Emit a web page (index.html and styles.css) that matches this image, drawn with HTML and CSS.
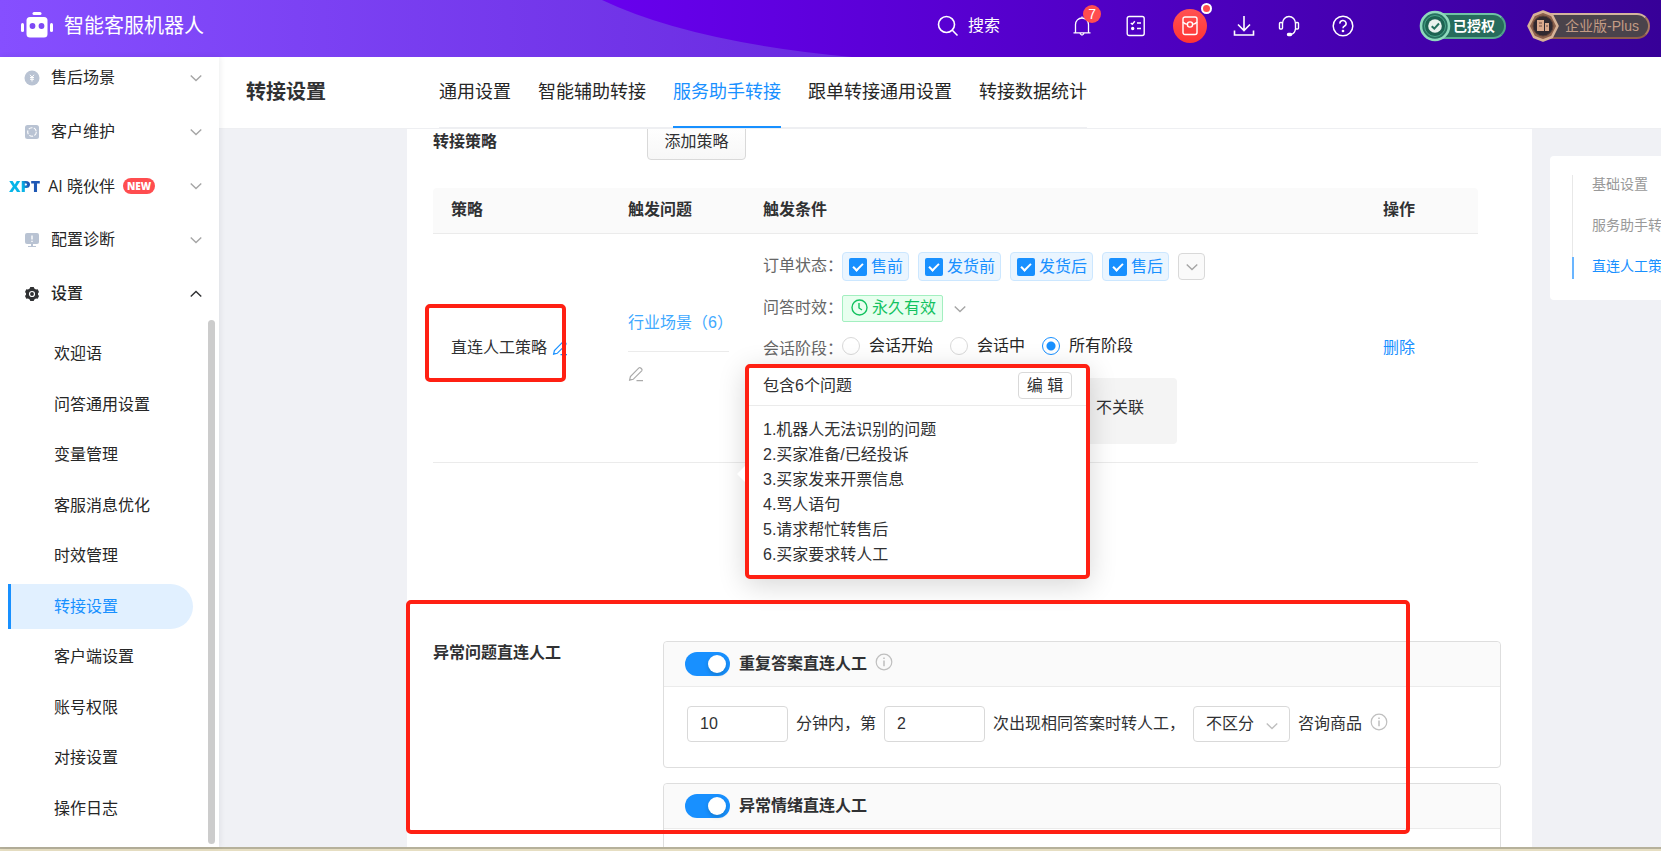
FILE: index.html
```html
<!DOCTYPE html>
<html lang="zh-CN">
<head>
<meta charset="utf-8">
<title>转接设置 - 智能客服机器人</title>
<link rel="stylesheet" href="styles.css">
</head>
<body>
<svg class="defs" aria-hidden="true">
  <symbol id="chevron" viewBox="0 0 12 12"><path d="M1.500 3.800 6 8.200 10.500 3.800" fill="none" stroke="currentColor" stroke-width="1.200"/></symbol>
  <symbol id="pencil" viewBox="0 0 16 16"><path d="M1.600 14.200 2.400 10.500 10.900 1.900Q11.800 1.200 12.700 2L13.700 3Q14.500 3.900 13.700 4.800L5.200 13.300ZM8.500 14.600H15" fill="none" stroke="currentColor" stroke-width="1.200"/></symbol>
  <symbol id="info" viewBox="0 0 18 18"><circle cx="9" cy="9" r="7.800" fill="none" stroke="currentColor" stroke-width="1.200"/><path d="M9 7.500V13.200M9 4.600V6" stroke="currentColor" stroke-width="1.500"/></symbol>
</svg>

<header class="topbar">
  <svg class="topbar-bg" viewBox="0 0 1661 57" preserveAspectRatio="none" aria-hidden="true">
    <defs>
      <linearGradient id="g1" x1="0" x2="1661" y1="0" y2="0" gradientUnits="userSpaceOnUse"><stop offset="0" stop-color="#864fff"/><stop offset=".5" stop-color="#6a2be0"/></linearGradient>
      <linearGradient id="g2" x1="600" x2="1661" y1="0" y2="0" gradientUnits="userSpaceOnUse"><stop offset="0" stop-color="#6800ee"/><stop offset="1" stop-color="#370098"/></linearGradient>
    </defs>
    <path d="M0 0H1661V57H0Z" fill="url(#g1)"/>
    <path d="M602 0Q690 42 852 57H1661V0Z" fill="url(#g2)"/>
  </svg>
  <div class="brand">
    <svg width="34" height="28" viewBox="0 0 34 28" fill="#fff" aria-hidden="true"><rect x="12.500" y="0" width="9" height="3" rx="1.500"/><rect x="6.500" y="5" width="21" height="20.500" rx="3.500"/><rect x="1" y="11" width="3" height="9" rx="1.500"/><rect x="30" y="11" width="3" height="9" rx="1.500"/><circle cx="12.500" cy="14" r="2.900" fill="#7d48f5"/><circle cx="21.500" cy="14" r="2.900" fill="#7d48f5"/></svg>
    <span>智能客服机器人</span>
  </div>
  <div class="tools">
    <button class="tool search"><svg width="22" height="22" viewBox="0 0 22 22" fill="none" stroke="#fff" stroke-width="1.600"><circle cx="9.500" cy="9.500" r="8"/><path d="M15.300 15.300 20.500 20.500"/></svg><span>搜索</span></button>
    <button class="tool bell" aria-label="通知"><svg width="20" height="22" viewBox="0 0 20 22" fill="none" stroke="#fff" stroke-width="1.300"><path d="M1.500 17.800H18.500M3.500 17.800V9.500A6.500 6.500 0 0 1 16.500 9.500V17.800M8 18.500Q10 21.500 12 18.500M10 1.500V3"/></svg><span class="count">7</span></button>
    <button class="tool list" aria-label="任务"><svg width="20" height="22" viewBox="0 0 20 22" fill="none" stroke="#fff" stroke-width="1.400"><rect x="1.200" y="1.500" width="17" height="19" rx="2"/><path d="M4.800 8 6.300 9.300 8.800 6.300M11 8H15M11 13.500H15"/><circle cx="6.700" cy="13.500" r="1" fill="#fff"/></svg></button>
    <button class="tool gift" aria-label="红包"><svg width="16" height="20" viewBox="0 0 16 20" fill="none" stroke="#fff" stroke-width="1.400"><rect x="1" y="1" width="14" height="17.500" rx="2"/><path d="M1 6Q3 8.500 5.300 8M10.700 8Q13 8.500 15 6"/><circle cx="8" cy="8.500" r="2.600"/></svg><span class="dot"></span></button>
    <button class="tool download" aria-label="下载"><svg width="22" height="22" viewBox="0 0 22 22" fill="none" stroke="#fff" stroke-width="1.600"><path d="M11 1V15M5 9.500 11 15.500 17 9.500M1.500 15.500V20H20.500V15.500"/></svg></button>
    <button class="tool headset" aria-label="客服"><svg width="22" height="22" viewBox="0 0 22 22" fill="none" stroke="#fff" stroke-width="1.400"><path d="M4.500 8.500A6.500 7 0 0 1 17.500 8.500M17.500 13.500Q17 18.500 13 19.500"/><rect x="1.500" y="7.500" width="3" height="6.500" rx="1"/><rect x="17.500" y="7.500" width="3" height="6.500" rx="1"/><rect x="9.500" y="18.500" width="4" height="2" rx="1" fill="#fff"/></svg></button>
    <button class="tool help" aria-label="帮助"><svg width="22" height="22" viewBox="0 0 22 22" fill="none" stroke="#fff" stroke-width="1.500"><circle cx="11" cy="11" r="9.800"/><path d="M7.900 8.600A3.100 3 0 1 1 12.300 11.200Q11 11.800 11 13.300"/><circle cx="11" cy="16" r=".6" fill="#fff"/></svg></button>
    <div class="plaque green"><svg width="32" height="32" viewBox="0 0 32 32" aria-hidden="true"><circle cx="16" cy="16" r="14" fill="#26705f" stroke="#8fd9bd" stroke-width="2.600"/><circle cx="16" cy="16" r="10.500" fill="#1d6352" stroke="#4aa588"/><circle cx="16" cy="16" r="6.800" fill="#e9f2ee"/><path d="M12.700 16.200 15.300 18.600 20 13.500" fill="none" stroke="#24705d" stroke-width="2"/></svg><span>已授权</span></div>
    <div class="plaque gold"><svg width="32" height="32" viewBox="0 0 32 32" aria-hidden="true"><path d="M16 1.500 25 5 30.500 16 25 27 16 30.500 7 27 1.500 16 7 5Z" fill="#8b604c" stroke="#d6b196" stroke-width="2.600" stroke-linejoin="round"/><circle cx="16" cy="16" r="10" fill="#302930" stroke="#593f37"/><path d="M10 10H17V21H10ZM18 13H22V21H18Z" fill="#dbab8e"/><path d="M12 13H15M12 16H15M19 16H21" stroke="#6c4b42"/></svg><span>企业版-Plus</span></div>
  </div>
</header>

<div class="body">
  <nav class="sidebar">
    <ul class="menu">
      <li><a href="#"><svg class="mi" viewBox="0 0 16 16"><circle cx="8" cy="8" r="7.500" fill="#b9c3d3"/><path d="M6 4.800 8 7.200 10 4.800M6 7.500H10M6 9.300H10M8 7V11.500" fill="none" stroke="#fff"/></svg><span>售后场景</span><svg class="arrow"><use href="#chevron"/></svg></a></li>
      <li><a href="#"><svg class="mi" viewBox="0 0 16 16"><rect x="1" y="1" width="14" height="14" rx="2.500" fill="#b9c3d3"/><circle cx="8" cy="8" r="4.300" fill="none" stroke="#fff" stroke-width="1.100" stroke-dasharray="4 1.400"/></svg><span>客户维护</span><svg class="arrow"><use href="#chevron"/></svg></a></li>
      <li><a href="#" class="ai"><b class="xpt">XPT</b><span>AI 晓伙伴</span><em>NEW</em><svg class="arrow"><use href="#chevron"/></svg></a></li>
      <li><a href="#"><svg class="mi" viewBox="0 0 16 16"><rect x="1" y="1" width="14" height="11" rx="2" fill="#b9c3d3"/><path d="M7 12H9V14H12V15H4V14H7Z" fill="#b9c3d3"/><path d="M8 3.500V7.500M8 8.700V10" stroke="#fff" stroke-width="1.400"/></svg><span>配置诊断</span><svg class="arrow"><use href="#chevron"/></svg></a></li>
      <li><a href="#" class="open"><svg class="mi" viewBox="0 0 16 16"><path d="M6.300 1H9.700L10.300 2.600 12 3.500 13.700 3.200 15 6 14 7.300V8.700L15 10 13.700 12.800 12 12.500 10.300 13.400 9.700 15H6.300L5.700 13.400 4 12.500 2.300 12.800 1 10 2 8.700V7.300L1 6 2.300 3.200 4 3.500 5.700 2.600Z" fill="#303133"/><circle cx="8" cy="8" r="2.500" fill="none" stroke="#fff" stroke-width="1.200"/></svg><span>设置</span><svg class="arrow up"><use href="#chevron"/></svg></a></li>
    </ul>
    <ul class="submenu">
      <li><a href="#">欢迎语</a></li>
      <li><a href="#">问答通用设置</a></li>
      <li><a href="#">变量管理</a></li>
      <li><a href="#">客服消息优化</a></li>
      <li><a href="#">时效管理</a></li>
      <li><a href="#" class="active">转接设置</a></li>
      <li><a href="#">客户端设置</a></li>
      <li><a href="#">账号权限</a></li>
      <li><a href="#">对接设置</a></li>
      <li><a href="#">操作日志</a></li>
    </ul>
    <div class="scrollbar"></div>
  </nav>

  <main class="main">
    <div class="pagehead">
      <h1>转接设置</h1>
      <nav class="tabs">
        <a href="#">通用设置</a>
        <a href="#">智能辅助转接</a>
        <a href="#" class="active">服务助手转接</a>
        <a href="#">跟单转接通用设置</a>
        <a href="#">转接数据统计</a>
      </nav>
    </div>

    <div class="content">
      <div class="panel">
        <section class="strategy">
          <div class="row-head"><h2>转接策略</h2><button class="add">添加策略</button></div>
          <table class="grid">
            <colgroup><col class="c1"><col class="c2"><col><col class="c4"></colgroup>
            <thead><tr><th>策略</th><th>触发问题</th><th>触发条件</th><th>操作</th></tr></thead>
            <tbody><tr>
              <td class="name"><div class="name-line"><span>直连人工策略</span><svg class="pen blue"><use href="#pencil"/></svg></div><div class="mark mark-name"></div></td>
              <td class="question"><a href="#">行业场景（6）</a><hr><svg class="pen"><use href="#pencil"/></svg></td>
              <td>
                <div class="conditions">
                  <div class="cond r1"><span class="lab">订单状态：</span>
                    <label class="tag"><input type="checkbox" checked>售前</label>
                    <label class="tag"><input type="checkbox" checked>发货前</label>
                    <label class="tag"><input type="checkbox" checked>发货后</label>
                    <label class="tag"><input type="checkbox" checked>售后</label>
                    <button class="more" aria-label="更多状态"><svg class="arrow"><use href="#chevron"/></svg></button>
                  </div>
                  <div class="cond r2"><span class="lab">问答时效：</span>
                    <span class="valid"><svg width="17" height="17" viewBox="0 0 17 17" fill="none" stroke="#13c25f" stroke-width="1.400"><circle cx="8.500" cy="8.500" r="7.500"/><path d="M8 4V9L11 11"/></svg>永久有效</span>
                    <svg class="arrow"><use href="#chevron"/></svg>
                  </div>
                  <div class="cond r3"><span class="lab">会话阶段：</span>
                    <label><input type="radio" name="stage">会话开始</label>
                    <label><input type="radio" name="stage">会话中</label>
                    <label><input type="radio" name="stage" checked>所有阶段</label>
                  </div>
                  <div class="relation">不关联</div>
                </div>
              </td>
              <td><a href="#" class="del">删除</a></td>
            </tr></tbody>
          </table>
          <div class="popover">
            <div class="pop-head"><span>包含6个问题</span><button>编 辑</button></div>
            <ul>
              <li>1.机器人无法识别的问题</li>
              <li>2.买家准备/已经投诉</li>
              <li>3.买家发来开票信息</li>
              <li>4.骂人语句</li>
              <li>5.请求帮忙转售后</li>
              <li>6.买家要求转人工</li>
            </ul>
          </div>
        </section>

        <section class="abnormal">
          <h2>异常问题直连人工</h2>
          <div class="cards">
            <div class="card">
              <div class="card-head"><label><input type="checkbox" class="switch" checked>重复答案直连人工</label><svg class="info"><use href="#info"/></svg></div>
              <div class="card-body">
                <input type="text" value="10" aria-label="分钟数"><span>分钟内，第</span>
                <input type="text" value="2" aria-label="次数"><span>次出现相同答案时转人工，</span>
                <span class="select"><select aria-label="是否区分商品"><option>不区分</option><option>区分</option></select><svg class="arrow"><use href="#chevron"/></svg></span>
                <span>咨询商品</span><svg class="info"><use href="#info"/></svg>
              </div>
            </div>
            <div class="card">
              <div class="card-head"><label><input type="checkbox" class="switch" checked>异常情绪直连人工</label></div>
              <div class="card-body"></div>
            </div>
          </div>
          <div class="mark mark-abnormal"></div>
        </section>
      </div>
      <aside class="anchor">
        <a href="#">基础设置</a>
        <a href="#">服务助手转接</a>
        <a href="#" class="active">直连人工策略</a>
      </aside>
    </div>
  </main>
</div>
<div class="desk-edge"></div>
</body>
</html>
```

FILE: styles.css
```css
*, ::before, ::after { box-sizing: border-box; }
body {
  margin: 0;
  height: 100vh;
  overflow: hidden;
  display: flex;
  flex-direction: column;
  font: 16px/24px "Liberation Sans", "Noto Sans CJK SC", sans-serif;
  color: #303133;
  background: #fff;
}
a { color: inherit; text-decoration: none; }
ul { list-style: none; margin: 0; padding: 0; }
h1, h2 { margin: 0; font-size: 16px; font-weight: 700; }
button, input, select { font: inherit; color: inherit; margin: 0; }
button { background: none; border: 0; padding: 0; white-space: nowrap; }
svg { flex: none; display: block; }
.defs { position: absolute; width: 0; height: 0; }
.arrow { width: 14px; height: 14px; color: #a6a6a6; }
.info { width: 18px; height: 18px; margin-bottom: 4px; color: #bfbfbf; }

/* top bar */
.topbar {
  position: relative;
  flex: none;
  height: 57px;
  display: flex;
  align-items: center;
  justify-content: space-between;
  padding: 0 11px 0 20px;
  color: #fff;
}
.topbar-bg { position: absolute; inset: 0; width: 100%; height: 100%; }
.brand, .tools { position: relative; display: flex; align-items: center; padding-bottom: 6px; }
.brand { gap: 10px; font-size: 20px; }
.tool { position: relative; display: flex; align-items: center; justify-content: center; }
.search { gap: 9px; margin-right: 72px; }
.bell { margin-right: 34px; }
.list { margin-right: 27px; }
.gift {
  width: 34px;
  height: 34px;
  border-radius: 50%;
  background: linear-gradient(#ff5252, #ff3434);
  margin-right: 26px;
}
.download { margin-right: 23px; }
.headset { margin-right: 32px; }
.help { margin-right: 65px; }
.count {
  position: absolute;
  left: 11px;
  top: -10px;
  width: 18px;
  height: 18px;
  border-radius: 9px;
  background: #ff4d4f;
  font-size: 14px;
  line-height: 18px;
}
.dot {
  position: absolute;
  right: -5px;
  top: -6px;
  width: 11px;
  height: 11px;
  border-radius: 50%;
  border: 2px solid #fff;
  background: #ff4d4f;
}
.plaque { display: flex; align-items: center; font-size: 14px; font-weight: 700; line-height: 22px; white-space: nowrap; }
.plaque svg { position: relative; z-index: 1; }
.plaque span { margin-left: -14px; padding: 0 9px 0 14px; border-radius: 0 13px 13px 0; border: 2px solid; }
.green { margin-right: 21px; }
.green span { background: #276b5c; border-color: #6fc3a4 #4fa487 #58ab8e; color: #fff; }
.gold span { padding-left: 18px; background: #4a434b; border-color: #d3b49d #a87a62 #8f5d4a; color: #c39b84; font-weight: 400; }

/* layout */
.body { flex: 1; min-height: 0; display: flex; }
.desk-edge { flex: none; height: 4px; background: #e6dec2; border-top: 2px solid #b6b19b; }

/* sidebar */
.sidebar {
  position: relative;
  z-index: 1;
  flex: none;
  width: 219px;
  display: flex;
  flex-direction: column;
  background: #fff;
  box-shadow: 1px 0 6px rgba(0, 21, 41, .08);
  color: #262626;
}
.menu { display: flex; flex-direction: column; gap: 12px; }
.menu a { display: flex; align-items: center; height: 42px; padding: 0 16px 0 24px; gap: 11px; }
.menu .arrow { margin-left: auto; }
.menu .up { transform: rotate(180deg); color: #303133; }
.menu .open { font-weight: 500; }
.menu .ai { padding-left: 9px; gap: 8px; font-family: "Open Sans", "Noto Sans CJK SC", sans-serif; }
.mi { width: 16px; height: 16px; }
.xpt {
  font-size: 16px;
  font-weight: 800;
  color: transparent;
  background: linear-gradient(75deg, #07b5e8 45%, #1f58b4 60%);
  background-clip: text;
}
.menu em {
  padding: 0 4px;
  border-radius: 8px;
  background: #ff4d4f;
  color: #fff;
  font-size: 10px;
  font-style: normal;
  font-weight: 800;
  line-height: 16px;
}
.submenu { flex: 1; display: flex; flex-direction: column; justify-content: space-between; padding: 16px 26px 16px 8px; }
.submenu a { display: block; padding-left: 43px; border-left: 3px solid transparent; line-height: 45px; }
.submenu .active { color: #1890ff; background: #e1f0ff; border-left-color: #1890ff; border-radius: 0 23px 23px 0; }
.scrollbar { position: absolute; right: 4px; top: 263px; bottom: 3px; width: 7px; border-radius: 4px; background: #ccc; }

/* page head */
.main { flex: 1; min-width: 0; display: flex; flex-direction: column; background: #f0f1f5; }
.pagehead { flex: none; height: 72px; display: flex; background: #fff; border-bottom: 1px solid #eeeff2; }
.pagehead h1 { width: 220px; padding-left: 27px; font-size: 20px; line-height: 70px; }
.tabs { display: flex; gap: 27px; font-size: 18px; line-height: 70px; border-bottom: 1px solid #eeeff2; color: #262626; white-space: nowrap; }
.tabs a { height: 71px; }
.tabs .active { color: #1890ff; border-bottom: 2px solid #1890ff; }

/* content */
.content { position: relative; flex: 1; min-height: 0; overflow: hidden; display: flex; align-items: flex-start; gap: 18px; padding-left: 188px; }
.panel { flex: 1; min-width: 0; background: #fff; padding: 0 31px 0 26px; margin-top: -5px; }
.strategy { position: relative; margin-right: 23px; }
.row-head { display: flex; align-items: center; height: 36px; }
.row-head h2 { width: 214px; }
.add { height: 36px; width: 99px; border: 1px solid #d9d9d9; border-radius: 4px; background: linear-gradient(#fff, #f7f7f7); }
.grid { width: 100%; margin-top: 28px; table-layout: fixed; border-collapse: separate; border-spacing: 0; }
.c1 { width: 177px; }
.c2 { width: 135px; }
.c4 { width: 113px; }
.grid th { height: 46px; padding: 0 18px 2px; text-align: left; font-weight: 700; background: #fafafa; border-bottom: 1px solid #ebebeb; }
.grid th:first-child { border-radius: 4px 0 0 0; }
.grid th:last-child { border-radius: 0 4px 0 0; }
.grid td { padding: 18px; border-bottom: 1px solid #ebebeb; vertical-align: middle; }
.grid .name { position: relative; padding-right: 0; }
.name-line { display: flex; align-items: center; gap: 5px; }
.pen { width: 16px; height: 16px; color: #aaa; }
.blue { color: #1890ff; }
.question a { color: #40a9ff; white-space: nowrap; }
.grid .question { padding-bottom: 21px; }
.question hr { border: 0; border-top: 1px solid #ebebeb; margin: 16px 0 14px; width: 101px; }
.del { color: #1890ff; }
.conditions { display: flex; flex-direction: column; gap: 14px; }
.cond { display: flex; align-items: center; }
.lab { width: 79px; color: #666; white-space: nowrap; }
.r1 { height: 29px; }
.r2 { height: 27px; }
.r1 .lab, .r2 .lab { padding-bottom: 2px; }
.r3 { height: 20px; gap: 17px; color: #262626; }
.r3 .lab { margin-right: -17px; padding-top: 5px; }
.r3 label { display: flex; align-items: center; gap: 9px; white-space: nowrap; }
.tag { display: flex; align-items: center; gap: 4px; height: 29px; padding: 0 5px 0 6px; margin-right: 9px; border: 1px solid #cce7ff; border-radius: 4px; background: #eaf5ff; color: #1890ff; white-space: nowrap; }
.tag input { appearance: none; display: flex; justify-content: center; width: 18px; height: 18px; padding-top: 3px; border-radius: 2px; background: #1890ff; }
.tag input::after { content: ""; width: 6px; height: 10px; border: solid #fff; border-width: 0 2px 2px 0; transform: rotate(45deg); }
.more { display: flex; align-items: center; justify-content: center; width: 27px; height: 27px; border: 1px solid #d9d9d9; border-radius: 4px; background: #fafafa; }
.valid { display: flex; align-items: center; gap: 4px; height: 27px; padding: 0 6px 2px 8px; margin-right: 10px; border: 1px solid #a3efc0; border-radius: 2px; background: #e8ffef; color: #13c25f; white-space: nowrap; }
.r3 input { appearance: none; width: 18px; height: 18px; border: 1px solid #d9d9d9; border-radius: 50%; background: #fff; }
.r3 input:checked { border-color: #1890ff; background: radial-gradient(circle, #1890ff 4px, #fff 5px); }
.relation { width: 414px; height: 66px; margin-top: 8px; padding: 18px 33px 0 0; border-radius: 4px; background: #f4f4f4; text-align: right; }

/* question popover */
.popover {
  position: absolute;
  z-index: 2;
  left: 312px;
  top: 240px;
  width: 345px;
  height: 215px;
  border: 4px solid #ff2013;
  border-radius: 5px;
  background: #fff;
  box-shadow: 0 6px 28px rgba(0, 0, 0, .16);
}
.popover::before { content: ""; position: absolute; left: -12px; top: 98px; border: solid transparent; border-width: 8px 8px 8px 0; border-right-color: #fff; }
.pop-head { display: flex; align-items: center; justify-content: space-between; height: 38px; padding: 0 14px 2px; border-bottom: 1px solid #ebebeb; }
.pop-head button { width: 54px; height: 27px; border: 1px solid #d9d9d9; border-radius: 4px; line-height: 24px; }
.popover ul { padding: 11px 14px; line-height: 25px; }

/* red outlines */
.mark { position: absolute; z-index: 3; border: 4px solid #ff2013; border-radius: 5px; pointer-events: none; }
.mark-name { left: -8px; top: 70px; width: 141px; height: 78px; }
.mark-abnormal { left: -27px; right: 91px; top: -41px; height: 234px; }

/* abnormal questions */
.abnormal { position: relative; display: flex; margin-top: 178px; }
.abnormal h2 { width: 230px; }
.cards { flex: 1; min-width: 0; display: flex; flex-direction: column; gap: 15px; }
.card { border: 1px solid #dedede; border-radius: 4px; }
.card-head { display: flex; align-items: center; gap: 8px; height: 45px; padding: 0 21px; background: #fafafa; border-bottom: 1px solid #ebebeb; border-radius: 4px 4px 0 0; font-weight: 700; }
.card-head label { display: flex; align-items: center; gap: 9px; }
.switch { position: relative; appearance: none; width: 45px; height: 24px; border-radius: 12px; background: #1890ff; }
.switch::after { content: ""; position: absolute; right: 4px; top: 3px; width: 18px; height: 18px; border-radius: 50%; background: #fff; box-shadow: 0 2px 4px rgba(0, 35, 11, .2); }
.card-body { display: flex; align-items: center; gap: 8px; min-height: 80px; padding: 0 23px 7px; white-space: nowrap; }
.card-body input { width: 101px; height: 36px; padding: 0 12px; border: 1px solid #d9d9d9; border-radius: 4px; background: #fff; }
.select { position: relative; }
.select select { appearance: none; width: 97px; height: 36px; padding: 0 12px; border: 1px solid #d9d9d9; border-radius: 4px; background: #fff; }
.select .arrow { position: absolute; right: 11px; top: 13px; color: #bfbfbf; pointer-events: none; }

/* anchor list */
.anchor {
  flex: none;
  width: 111px;
  height: 144px;
  margin-top: 27px;
  padding: 19px 0 0 22px;
  border-radius: 4px 0 0 4px;
  background: #fff;
  font-size: 14px;
  line-height: 18px;
  color: #999;
  white-space: nowrap;
  overflow: hidden;
}
.anchor a { display: block; height: 41px; padding-left: 19px; border-left: 1px solid #e8e8e8; }
.anchor .active { height: 22px; padding-left: 18px; border-left: 2px solid #69b5ff; color: #1890ff; }
```
